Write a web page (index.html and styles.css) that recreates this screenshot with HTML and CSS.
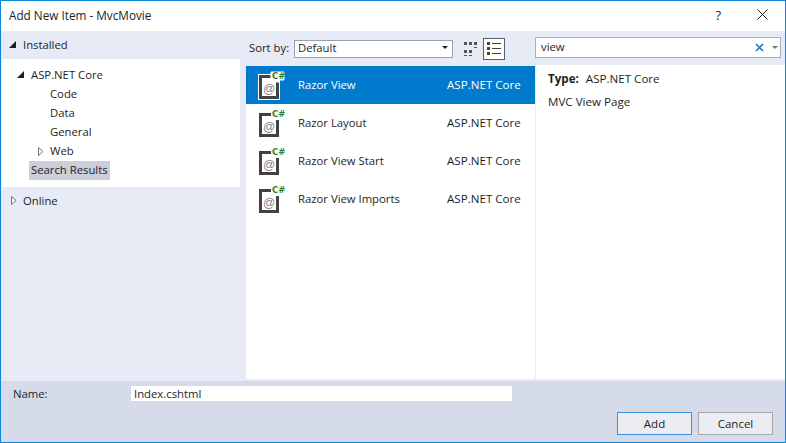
FILE: index.html
```html
<!DOCTYPE html>
<html lang="en">

<head>
    <meta charset="UTF-8" />
    <title>Add New Item - MvcMovie</title>
    <link rel="stylesheet" href="styles.css">
</head>

<body>
    <div class="window">
        <div class="titlebar">
            <span class="title">Add New Item - MvcMovie</span>
            <span class="help">?</span>
            <svg class="close" width="11" height="11" viewBox="0 0 11 11">
                <path d="M0.5 0.5L10.5 10.5M10.5 0.5L0.5 10.5" />
            </svg>
        </div>

        <div class="main">
            <div class="left">
                <div class="group"><span class="arrow open"></span>Installed</div>
                <div class="tree">
                    <div class="node depth-1"><span class="arrow open"></span>ASP.NET Core</div>
                    <div class="node depth-2">Code</div>
                    <div class="node depth-2">Data</div>
                    <div class="node depth-2">General</div>
                    <div class="node depth-2">
                        <svg class="arrow-closed" width="6" height="9" viewBox="0 0 6 9"><path d="M0.5 0.5L5 4.5L0.5 8.5Z" /></svg>
                        Web
                    </div>
                    <div class="node depth-3"><span class="picked">Search Results</span></div>
                </div>
                <div class="group">
                    <svg class="arrow-closed" width="6" height="9" viewBox="0 0 6 9"><path d="M0.5 0.5L5 4.5L0.5 8.5Z" /></svg>
                    Online
                </div>
            </div>

            <div class="center">
                <div class="toolbar">
                    <span class="sort-label">Sort by:</span>
                    <div class="select">
                        <span>Default</span>
                        <span class="caret"></span>
                    </div>
                    <svg class="view-icon" width="16" height="16" viewBox="0 0 16 16">
                        <path d="M1 1h3v3H1zM6 1h3v3H6zM11 1h3v3h-3zM11 6h3v1h-3zM1 9h3v3H1zM6 9h3v3H6zM1 14h3v1H1zM6 14h3v1H6z" />
                    </svg>
                    <div class="view-btn">
                        <svg width="16" height="16" viewBox="0 0 16 16">
                            <path d="M1 1h3v3H1zM6 2h9v1H6zM1 6h3v3H1zM6 7h9v1H6zM1 11h3v3H1zM6 12h9v1H6z" />
                        </svg>
                    </div>
                </div>
                <div class="list">
                    <div class="row selected">
                        <svg class="row-icon" viewBox="0 0 28 28">
                            <path class="frame" d="M2 4H15V10H22V28H2Z" />
                            <path class="sheet" d="M5 7H15V10H19V25H5Z" />
                            <text class="at" x="12" y="22">@</text>
                            <path class="badge" d="M14 1H27V9H22V11H14Z" />
                            <text class="cs" x="15" y="8">C#</text>
                        </svg>
                        <span class="row-name">Razor View</span>
                        <span class="row-type">ASP.NET Core</span>
                    </div>
                    <div class="row">
                        <svg class="row-icon" viewBox="0 0 28 28">
                            <path class="frame" d="M2 4H15V10H22V28H2Z" />
                            <path class="sheet" d="M5 7H15V10H19V25H5Z" />
                            <text class="at" x="12" y="22">@</text>
                            <path class="badge" d="M14 1H27V9H22V11H14Z" />
                            <text class="cs" x="15" y="8">C#</text>
                        </svg>
                        <span class="row-name">Razor Layout</span>
                        <span class="row-type">ASP.NET Core</span>
                    </div>
                    <div class="row">
                        <svg class="row-icon" viewBox="0 0 28 28">
                            <path class="frame" d="M2 4H15V10H22V28H2Z" />
                            <path class="sheet" d="M5 7H15V10H19V25H5Z" />
                            <text class="at" x="12" y="22">@</text>
                            <path class="badge" d="M14 1H27V9H22V11H14Z" />
                            <text class="cs" x="15" y="8">C#</text>
                        </svg>
                        <span class="row-name">Razor View Start</span>
                        <span class="row-type">ASP.NET Core</span>
                    </div>
                    <div class="row">
                        <svg class="row-icon" viewBox="0 0 28 28">
                            <path class="frame" d="M2 4H15V10H22V28H2Z" />
                            <path class="sheet" d="M5 7H15V10H19V25H5Z" />
                            <text class="at" x="12" y="22">@</text>
                            <path class="badge" d="M14 1H27V9H22V11H14Z" />
                            <text class="cs" x="15" y="8">C#</text>
                        </svg>
                        <span class="row-name">Razor View Imports</span>
                        <span class="row-type">ASP.NET Core</span>
                    </div>
                </div>
            </div>

            <div class="right">
                <div class="search">
                    <span class="search-text">view</span>
                    <svg class="search-clear" width="9" height="9" viewBox="0 0 9 9">
                        <path d="M1 1L8 8M8 1L1 8" />
                    </svg>
                    <span class="caret light"></span>
                </div>
                <div class="details">
                    <p class="type"><b>Type:</b>ASP.NET Core</p>
                    <p class="desc">MVC View Page</p>
                </div>
            </div>
        </div>

        <div class="footer">
            <div class="name-row">
                <span class="name-label">Name:</span>
                <div class="name-input">Index.cshtml</div>
            </div>
            <div class="buttons">
                <button class="primary">Add</button>
                <button>Cancel</button>
            </div>
        </div>
    </div>
</body>

</html>
```

FILE: styles.css
```css
* {
    box-sizing: border-box;
    margin: 0;
    padding: 0;
}

body {
    font-family: 'Open Sans', 'Noto Sans', sans-serif;
    font-size: 11.3px;
    color: #1e1e1e;
    background-color: #ffffff;
}

.window {
    width: 786px;
    height: 443px;
    border: 1px solid #0f87d8;
    display: flex;
    flex-direction: column;
    background-color: #e6ebf5;
}

.titlebar {
    height: 30px;
    flex: none;
    display: flex;
    align-items: center;
    padding: 0 17px 3px 8px;
    background-color: #ffffff;
}

.title {
    font-size: 11.75px;
    flex: 1;
}

.help {
    font-size: 13px;
    margin-right: 36px;
}

.close path {
    stroke: #1e1e1e;
    fill: none;
}

.main {
    flex: 1;
    display: flex;
    min-height: 0;
}

/* left tree */
.left {
    width: 239px;
    flex: none;
}

.group {
    height: 28px;
    display: flex;
    align-items: center;
    padding: 0 0 2px 8px;
}

.group .arrow {
    margin-right: 7px;
}

.group .arrow-closed {
    margin: 0 6px 0 2px;
}

.tree {
    height: 128px;
    margin-left: 1px;
    padding-top: 7px;
    background-color: #ffffff;
}

.node {
    height: 19px;
    display: flex;
    align-items: center;
    padding-bottom: 2px;
}

.depth-1 {
    padding-left: 15px;
}

.depth-1 .arrow {
    margin-right: 7px;
}

.depth-2 {
    padding-left: 48px;
    position: relative;
}

.depth-2 .arrow-closed {
    position: absolute;
    left: 36px;
    top: 5px;
}

.depth-3 {
    padding: 0 0 0 27px;
}

.picked {
    height: 19px;
    line-height: 17px;
    padding: 0 2px;
    background-color: #ccced9;
}

.arrow {
    display: inline-block;
    flex: none;
    width: 0;
    height: 0;
}

.arrow.open {
    border-left: 7px solid transparent;
    border-bottom: 7px solid #1e1e1e;
}

.arrow-closed {
    flex: none;
}

.arrow-closed path {
    fill: #ffffff;
    stroke: #777777;
}

/* item list */
.center {
    width: 295px;
    flex: none;
    padding-left: 6px;
    display: flex;
    flex-direction: column;
}

.toolbar {
    height: 35px;
    flex: none;
    display: flex;
    align-items: center;
    padding-left: 3px;
}

.sort-label {
    width: 45px;
    flex: none;
    margin-bottom: 2px;
}

.select {
    width: 159px;
    height: 18px;
    display: flex;
    align-items: center;
    justify-content: space-between;
    padding: 0 4px 2px 3px;
    background-color: #ffffff;
    border: 1px solid #9aa0ae;
}

.caret {
    width: 0;
    height: 0;
    border-left: 3px solid transparent;
    border-right: 3px solid transparent;
    border-top: 3px solid #1e1e1e;
}

.caret.light {
    border-top-color: #777777;
    margin-left: 8px;
}

.view-icon {
    margin-left: 10px;
    fill: #555555;
}

.view-btn {
    width: 22px;
    height: 22px;
    margin-left: 4px;
    display: flex;
    align-items: center;
    justify-content: center;
    background-color: #fffef6;
    border: 1px solid #4d6082;
    fill: #424242;
}

.list {
    flex: 1;
    background-color: #ffffff;
}

.row {
    height: 38px;
    display: flex;
    align-items: center;
    padding-left: 11px;
}

.row-icon {
    width: 28px;
    height: 28px;
    flex: none;
    margin-right: 13px;
    overflow: visible;
}

.frame {
    fill: #424242;
}

.sheet {
    fill: #ffffff;
}

.badge {
    fill: #ffffff;
}

.at {
    font-family: 'Liberation Sans', sans-serif;
    font-size: 12px;
    fill: #858585;
    text-anchor: middle;
}

.cs {
    font-family: 'DejaVu Sans', sans-serif;
    font-size: 8.5px;
    font-weight: bold;
    fill: #2f7f2b;
}

.row-name {
    flex: 1;
    margin-bottom: 2px;
}

.row-type {
    width: 88px;
    flex: none;
    font-size: 11.6px;
    margin-bottom: 2px;
}

.row.selected {
    background-color: #007acc;
    color: #ffffff;
}

.row.selected .frame {
    stroke: #ffffff;
    stroke-width: 2px;
    paint-order: stroke;
}

.row.selected .badge {
    stroke: #ffffff;
    stroke-width: 1px;
}

/* details */
.right {
    flex: 1;
    display: flex;
    flex-direction: column;
}

.search {
    height: 21px;
    margin: 6px 4px 7px 0;
    display: flex;
    align-items: center;
    padding: 0 2px 0 5px;
    background-color: #ffffff;
    border: 1px solid #a9afbd;
}

.search-text {
    flex: 1;
    margin-bottom: 2px;
}

.search-clear path {
    stroke: #0f7ac6;
    stroke-width: 1.6;
    fill: none;
}

.details {
    flex: 1;
    margin-left: 1px;
    padding: 6px 12px;
    background-color: #ffffff;
    font-size: 11.6px;
}

.type b {
    margin-right: 7px;
}

.desc {
    margin-top: 8px;
}

/* bottom */
.footer {
    height: 61px;
    flex: none;
    margin-top: 2px;
    padding: 5px 12px 0 12px;
    background-color: #d6dbe9;
}

.name-row {
    display: flex;
    align-items: center;
}

.name-label {
    width: 118px;
    flex: none;
}

.name-input {
    width: 381px;
    height: 15px;
    line-height: 15px;
    padding-left: 3px;
    background-color: #ffffff;
}

.buttons {
    display: flex;
    justify-content: flex-end;
    gap: 6px;
    margin-top: 11px;
}

button {
    width: 75px;
    height: 23px;
    font-family: inherit;
    font-size: 11.5px;
    color: #1e1e1e;
    background-color: #ecedf3;
    border: 1px solid #a8a8a8;
}

button.primary {
    border-color: #3c8fe6;
}
```
